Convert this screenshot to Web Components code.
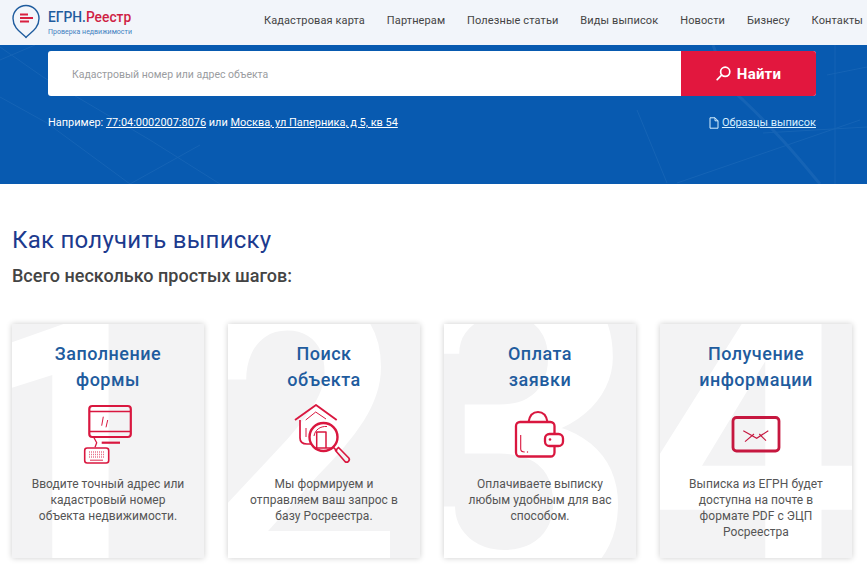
<!DOCTYPE html>
<html lang="ru"><head><meta charset="utf-8"><title>ЕГРН.Реестр</title>
<style>
html,body{margin:0;padding:0;background:#fff;height:567px;overflow:hidden;font-family:Roboto,"Liberation Sans",sans-serif}
</style></head><body>
<egrn-header></egrn-header>
<egrn-hero></egrn-hero>
<egrn-steps>
  <step-card num="1" title1="Заполнение" title2="формы" icon="form">Вводите точный адрес или<br>кадастровый номер<br>объекта недвижимости.</step-card>
  <step-card num="2" title1="Поиск" title2="объекта" icon="search">Мы формируем и<br>отправляем ваш запрос в<br>базу Росреестра.</step-card>
  <step-card num="3" title1="Оплата" title2="заявки" icon="wallet">Оплачиваете выписку<br>любым удобным для вас<br>способом.</step-card>
  <step-card num="4" title1="Получение" title2="информации" icon="mail">Выписка из ЕГРН будет<br>доступна на почте в<br>формате PDF с ЭЦП<br>Росреестра</step-card>
</egrn-steps>
<script>
function shadow(el,html){el.attachShadow({mode:'open'}).innerHTML=html}
customElements.define('egrn-header',class extends HTMLElement{connectedCallback(){
const items=['Кадастровая карта','Партнерам','Полезные статьи','Виды выписок','Новости','Бизнесу','Контакты'];
shadow(this,`<style>
:host{display:flex;height:45px;background:#f2f5fa;align-items:center;justify-content:space-between;padding:0 4px 0 12px;box-sizing:border-box;font-family:Roboto,sans-serif}
.logo{display:flex;gap:8px;align-items:flex-start;height:45px}
svg{width:28px;height:38px;margin-top:2px;display:block}
.txt{display:flex;flex-direction:column;padding-top:7px}
.n{font-size:15.5px;font-weight:500;line-height:20px;color:#1f5c9e;white-space:nowrap;transform:scaleX(.89);transform-origin:left}
.n b{font-weight:500;color:#cf1f45}
.s{font-size:7px;line-height:10px;color:#3f7fc0;white-space:nowrap;letter-spacing:.02px}
nav{display:flex;gap:21.9px;margin-top:-4px}
a{font-size:11px;color:#444;letter-spacing:.11px;white-space:nowrap}
</style>
<div class="logo"><svg viewBox="0 0 28 38" fill="none"><path d="M14 35.500C11 31.500 1 27 1 16.500a13 13 0 0 1 26 0C27 27 17 31.500 14 35.500Z" stroke="#1f5c9e" stroke-width="1.400" stroke-linejoin="round"/><path d="M8 12.500h8M8 16h13M8 19.500h9" stroke="#d9203f" stroke-width="2"/></svg>
<div class="txt"><span class="n">ЕГРН.<b>Реестр</b></span><span class="s">Проверка недвижимости</span></div></div>
<nav>${items.map(i=>`<a>${i}</a>`).join('')}</nav>`)}});

customElements.define('egrn-hero',class extends HTMLElement{connectedCallback(){
shadow(this,`<style>
:host{display:block;position:relative;height:139px;background:#085ab0;overflow:hidden;font-family:Roboto,sans-serif;color:#fff}
.map{position:absolute;inset:0;width:100%;height:100%}
.wrap{position:relative;margin:0 51px 0 48px;padding-top:6px}
.search{display:flex;height:45px;border-radius:3px;overflow:hidden;background:#fff}
.input{flex:1;display:flex;align-items:center;padding:1px 0 0 24px;font-size:10.500px;color:#9a9ca0}
.btn{width:135px;background:#e2173e;display:flex;align-items:center;justify-content:center;gap:6px;font-weight:700;font-size:15px;letter-spacing:.2px}
.btn svg{width:15px;height:15px;display:block}
.ex{display:flex;justify-content:space-between;align-items:center;margin-top:20px;font-size:10.950px;line-height:14px}
a{color:#fff;text-decoration:underline}
.doc{display:flex;align-items:center;gap:3px;color:#d8f0ff}
.doc a{color:#d8f0ff}
.doc svg{width:10px;height:12px;display:block}
</style>
<svg class="map" viewBox="0 0 867 139" fill="none" stroke="#2a74bf" stroke-width="1" opacity=".38">
<path d="M0 2 43 32 150 95 220 139M0 52 47 78 130 139M35 0 0 15M130 139 200 100"/>
<path d="M637 65 667 138M677 138 860 75M763 88 867 82M835 0V139M827 30 867 22"/>
<path d="M713 0C722 25 730 45 743 55 780 90 800 115 820 139" stroke-width="3"/>
</svg>
<div class="wrap">
<div class="search"><div class="input">Кадастровый номер или адрес объекта</div>
<div class="btn"><svg viewBox="0 0 15 15" fill="none" stroke="#fff" stroke-width="1.700"><circle cx="9.200" cy="5.800" r="4.600"/><path d="M5.600 9.200 1.200 13.600" stroke-linecap="round"/></svg>Найти</div></div>
<div class="ex"><span>Например: <a>77:04:0002007:8076</a> или <a>Москва, ул Паперника, д 5, кв 54</a></span>
<span class="doc"><svg viewBox="0 0 10 12" fill="none" stroke="#d8f0ff" stroke-width="1"><path d="M1 .8h5l3 3v7.400H1ZM6 .8v3h3"/></svg><a>Образцы выписок</a></span></div>
</div>`)}});

customElements.define('egrn-steps',class extends HTMLElement{connectedCallback(){
shadow(this,`<style>
:host{display:block;padding:42px 15px 0 12px;font-family:Roboto,sans-serif}
h2{margin:0;font-size:24px;font-weight:400;line-height:28px;color:#1c3a8e;letter-spacing:.25px}
h3{margin:10px 0 0;font-size:18px;font-weight:500;line-height:24px;color:#444}
.grid{display:grid;grid-template-columns:repeat(4,192px);gap:24px;margin-top:36px}
</style><h2>Как получить выписку</h2><h3>Всего несколько простых шагов:</h3><div class="grid"><slot></slot></div>`)}});

const R='#d9173f';
const icons={
form:`<svg style="margin-left:4px" viewBox="0 0 80 75" fill="none" stroke="${R}"><rect x="19.300" y="11" width="41.500" height="31" rx="3" stroke-width="2.200"/><path d="M19 16.500h42M19 36.500h42" stroke-width="1.400"/><path d="M33.300 21.700 31.700 30.700M37.700 25 36 32.300" stroke-width="1"/><path d="M24 42.700 26.700 47.700 25 52.300" stroke-width="1.300"/><path d="M31.700 47.700H50" stroke-width="2.200"/><rect x="14.700" y="53" width="24" height="15" rx="2.500" stroke-width="1.600"/><path d="M19 57h15.500M19 59.500h15.500M19 62h15.500" stroke-width="1.300" stroke-dasharray="1 1" opacity=".6"/><path d="M20 65.200h13" stroke-width=".9"/></svg>`,
search:`<svg style="margin-left:2px" viewBox="0 0 80 75" fill="none" stroke="${R}" stroke-linejoin="round"><path d="M10 25 31 10 51.700 25" stroke-width="1.900"/><path d="M15 25v18c0 4 3 6 7 6h4" stroke-width="1.700"/><path d="M20.700 25 30.700 17 41 24" stroke-width="1"/><path d="M21 33v9" stroke-width="1"/><circle cx="38.500" cy="42" r="14" fill="#fff" fill-opacity=".15" stroke-width="2.400"/><path d="M29 41c1-6 6-10 13-9.500" stroke-width="1"/><path d="M31.700 53V37h9.300v16" stroke-width="1.500"/><path d="M30 53h17" stroke-width="1.500"/><path d="M48.500 52.500 52 56" stroke-width="1.700"/><path d="M50.500 55.500l3-3 10.300 10.500c1.700 2.300-1.400 5.200-3.600 3.700Z" stroke-width="1.700"/></svg>`,
wallet:`<svg viewBox="0 0 80 75" fill="none" stroke="${R}" stroke-width="2.300"><path d="M54.500 51v6.500a4 4 0 0 1-4 4H20a4 4 0 0 1-4-4V31a4 4 0 0 1 4-4h30.500a4 4 0 0 1 4 4v7.500"/><path d="M28.500 27c1-6 4.500-10 9.500-10s8.500 4 9.500 10" stroke-width="2"/><rect x="45" y="39" width="18" height="12" rx="4.500"/><circle cx="50" cy="44.500" r="1.300" fill="${R}" stroke="none"/><path d="M20.700 40v14c0 2 1.500 3 4 3" stroke-width="1.100"/><circle cx="27.500" cy="57" r=".7" fill="${R}" stroke="none"/></svg>`,
mail:`<svg viewBox="0 0 80 75" fill="none" stroke="#c6173f"><rect x="17" y="22.500" width="46" height="33.500" rx="3.500" stroke-width="2.800"/><path d="M27.300 35.700 40.700 43.300 52.300 35.700M29 46.700 38 39M50 45.700 43.300 39" stroke-width="1.100"/></svg>`};
const D={1:{x:-60,y:-65,s:400},2:{x:-52,y:-85,s:400},3:{x:-68,y:-115,s:460},4:{x:-25,y:-88,s:400}};
customElements.define('step-card',class extends HTMLElement{connectedCallback(){
const ic=this.getAttribute('icon');const n=this.getAttribute('num');const d=D[n];
shadow(this,`<style>
:host{display:block;position:relative;height:234px;background:#f3f3f4;box-shadow:0 0 6px rgba(0,0,0,.2);overflow:hidden;text-align:center;font-family:Roboto,sans-serif}
.num{position:absolute;left:${d.x}px;right:${-d.x}px;top:${d.y}px;font-size:${d.s}px;line-height:${d.s}px;font-weight:700;color:#fff;text-align:center;user-select:none}
.c{position:relative;display:flex;flex-direction:column;align-items:center;height:100%}
h4{margin:17px 0 0;font-size:18px;font-weight:500;line-height:25.500px;color:#1f5c9e;letter-spacing:.5px}
svg{width:80px;height:75px;display:block;margin-top:3px;flex:none}
p{margin:6px 0 0;font-size:12px;line-height:16px;color:#555;letter-spacing:.05px}
</style><div class="num" aria-hidden="true">${n}</div><div class="c"><h4>${this.getAttribute('title1')}<br>${this.getAttribute('title2')}</h4>${icons[ic]}<p><slot></slot></p></div>`)}});
</script></body></html>
